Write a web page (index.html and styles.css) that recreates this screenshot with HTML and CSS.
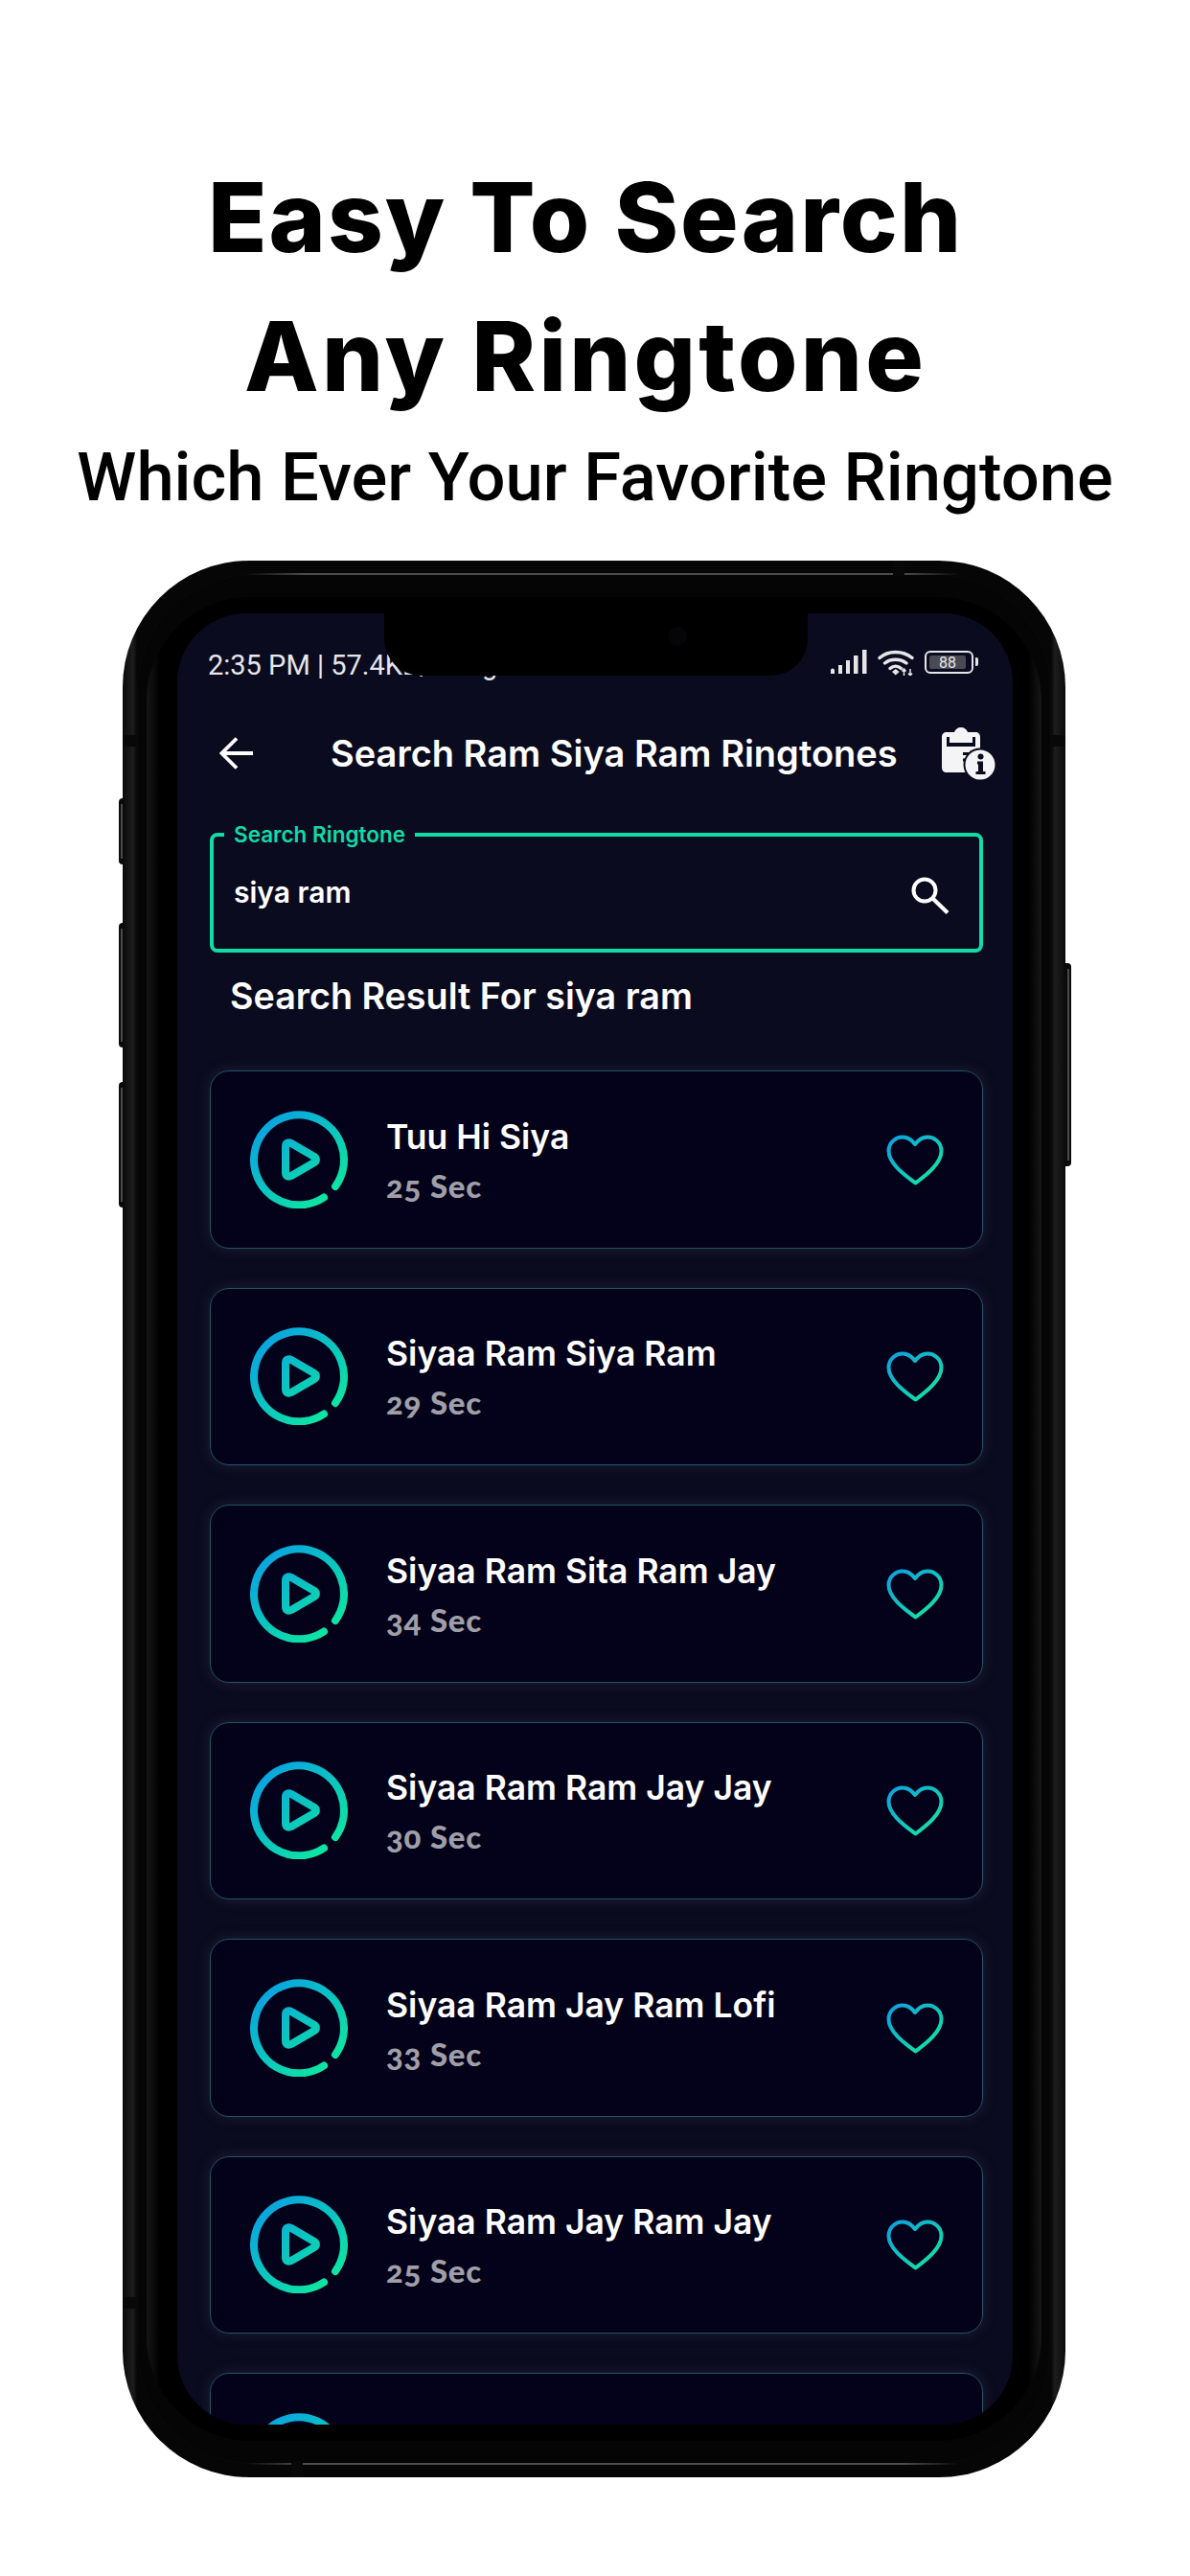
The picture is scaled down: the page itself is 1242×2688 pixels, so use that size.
FILE: index.html
```html
<!DOCTYPE html>
<html lang="en">
<head>
<meta charset="utf-8">
<title>Easy To Search Any Ringtone</title>
<link rel="stylesheet" href="styles.css">
</head>
<body>
<svg class="defs" width="0" height="0" aria-hidden="true">
  <defs>
    <linearGradient id="g-play" gradientUnits="userSpaceOnUse" x1="14" y1="12" x2="84" y2="92">
      <stop offset="0" stop-color="#0aa3e0"/>
      <stop offset="1" stop-color="#0ce8a0"/>
    </linearGradient>
    <linearGradient id="g-heart" gradientUnits="userSpaceOnUse" x1="8" y1="4" x2="46" y2="50">
      <stop offset="0" stop-color="#0ea5dc"/>
      <stop offset="1" stop-color="#12e3a4"/>
    </linearGradient>
    <symbol id="play" viewBox="0 0 102 102">
      <path d="M89 79A47 47 0 1 0 77 90.500" fill="none" stroke="url(#g-play)" stroke-width="8" stroke-linecap="round"/>
      <path d="M37 37.500C37 33.500 40 32.500 43 34L67 48C69.500 49.500 69.500 52.500 67 54L43 68C40 69.500 37 68.500 37 64.500Z" fill="none" stroke="url(#g-play)" stroke-width="8" stroke-linejoin="round"/>
    </symbol>
    <symbol id="heart" viewBox="0 0 60 54">
      <path d="M30.500 50.500C22 44 2.500 31 2.500 17C2.500 8 10 2.500 17 2.500C23 2.500 27 6 30 10C33 6 37 2.500 43 2.500C50 2.500 57.500 8 57.500 17C57.500 31 39 44 30.500 50.500Z" fill="none" stroke="url(#g-heart)" stroke-width="4" stroke-linejoin="round"/>
    </symbol>
  </defs>
</svg>

<main class="page">
  <header class="headline">
    <h1 class="headline-title">Easy To Search<br><span class="headline-line2">Any Ringtone</span></h1>
    <p class="headline-sub">Which Ever Your Favorite Ringtone</p>
  </header>

  <div class="phone">
    <span class="btn btn-l1"></span>
    <span class="btn btn-l2"></span>
    <span class="btn btn-l3"></span>
    <span class="btn btn-r1"></span>
    <span class="rim-line rim-top"></span>
    <span class="rim-line rim-bottom"></span>
    <span class="gap gap-top"></span>
    <span class="gap gap-bottom"></span>
    <span class="gap gap-left1"></span>
    <span class="gap gap-right1"></span>
    <span class="gap gap-left2"></span>

    <div class="rim">
      <div class="bezel">
        <div class="screen">
          <div class="notch"><span class="camera"></span></div>

          <div class="statusbar">
            <span class="status-text">2:35 PM | 57.4KB/s · Jg</span>
            <div class="status-icons">
              <svg class="ic-signal" viewBox="0 0 38 25" aria-hidden="true">
                <path d="M0 21.500a2 2 0 0 1 4 0V25H0zM8 16h4v9H8zM16 11h4v14h-4zM24 6h4.500v19H24zM33 0h4.500v25H33z" fill="#e6e6ea"/>
              </svg>
              <svg class="ic-wifi" viewBox="0 0 38 28" aria-hidden="true">
                <path d="M2 9.500C11 1.500 26 1.500 36 9.500M7.500 15C13.500 10 23.500 10 30 15M13 20.500C16.500 17.500 21 17.500 24.500 20.500" fill="none" stroke="#e6e6ea" stroke-width="3.400" stroke-linecap="round"/>
                <path d="M15 24l3.800-3 3.800 3-3.800 3.500z" fill="#e6e6ea"/>
                <path d="M27.500 21v7M34 21v7M25.500 23.500l2-2.500 2 2.500M32 25.500l2 2.500 2-2.500" fill="none" stroke="#e6e6ea" stroke-width="1.500"/>
              </svg>
              <div class="battery">
                <div class="battery-body"><span class="battery-fill">88</span></div>
                <span class="battery-tip"></span>
              </div>
            </div>
          </div>

          <div class="appbar">
            <svg class="ic-back" viewBox="0 0 36 36" aria-hidden="true">
              <path d="M35 18H3M18 2.500L2.500 18 18 33.500" fill="none" stroke="#fff" stroke-width="3.800"/>
            </svg>
            <h2 class="appbar-title">Search Ram Siya Ram Ringtones</h2>
            <svg class="ic-info" viewBox="0 0 56 56" aria-hidden="true">
              <path d="M5 6h8C14 3 16.500 1 20 1s6 2 7 5h8c3 0 5 2 5 5v32c0 3-2 5-5 5H5c-3 0-5-2-5-5V11c0-3 2-5 5-5z" fill="#f4f4f6"/>
              <path d="M5 11h3v6h24v-6h3v10H5z" fill="#0b0b1f"/>
              <path d="M5 21h30v3H22v3h10v3H22v3h8v3H22v4h8v4H5z" fill="#f4f4f6"/>
              <path d="M22 27h18v3H22zM22 33.500h18v3H22z" fill="#0b0b1f"/>
              <circle cx="40" cy="40" r="17.500" fill="#0b0b1f"/>
              <circle cx="40" cy="40" r="15.500" fill="#f4f4f6"/>
              <circle cx="40.500" cy="31.500" r="3" fill="#0b0b1f"/>
              <path d="M37 36.500h6V47h2.500v3H35.500v-3H38v-7.500h-1z" fill="#0b0b1f"/>
            </svg>
          </div>

          <div class="search">
            <span class="search-label">Search Ringtone</span>
            <span class="search-value">siya ram</span>
            <svg class="ic-search" viewBox="0 0 40 40" aria-hidden="true">
              <circle cx="14" cy="14" r="11.500" fill="none" stroke="#fff" stroke-width="4"/>
              <path d="M22.500 22.500L38 37.500" fill="none" stroke="#fff" stroke-width="4.200"/>
            </svg>
          </div>

          <h3 class="result-heading">Search Result For siya ram</h3>

          <ul class="list">
            <li class="card">
              <svg class="ic-play"><use href="#play"/></svg>
              <div class="card-text"><span class="card-title">Tuu Hi Siya</span><span class="card-time">25 Sec</span></div>
              <svg class="ic-heart"><use href="#heart"/></svg>
            </li>
            <li class="card">
              <svg class="ic-play"><use href="#play"/></svg>
              <div class="card-text"><span class="card-title">Siyaa Ram Siya Ram</span><span class="card-time">29 Sec</span></div>
              <svg class="ic-heart"><use href="#heart"/></svg>
            </li>
            <li class="card">
              <svg class="ic-play"><use href="#play"/></svg>
              <div class="card-text"><span class="card-title">Siyaa Ram Sita Ram Jay</span><span class="card-time">34 Sec</span></div>
              <svg class="ic-heart"><use href="#heart"/></svg>
            </li>
            <li class="card">
              <svg class="ic-play"><use href="#play"/></svg>
              <div class="card-text"><span class="card-title">Siyaa Ram Ram Jay Jay</span><span class="card-time">30 Sec</span></div>
              <svg class="ic-heart"><use href="#heart"/></svg>
            </li>
            <li class="card">
              <svg class="ic-play"><use href="#play"/></svg>
              <div class="card-text"><span class="card-title">Siyaa Ram Jay Ram Lofi</span><span class="card-time">33 Sec</span></div>
              <svg class="ic-heart"><use href="#heart"/></svg>
            </li>
            <li class="card">
              <svg class="ic-play"><use href="#play"/></svg>
              <div class="card-text"><span class="card-title">Siyaa Ram Jay Ram Jay</span><span class="card-time">25 Sec</span></div>
              <svg class="ic-heart"><use href="#heart"/></svg>
            </li>
            <li class="card">
              <svg class="ic-play"><use href="#play"/></svg>
            </li>
          </ul>
        </div>
      </div>
    </div>
  </div>
</main>
</body>
</html>
```

FILE: styles.css
```css
* { box-sizing: border-box; }

html, body {
  margin: 0;
  padding: 0;
  background: #fff;
}

.defs { position: absolute; }

.page {
  width: 1242px;
  height: 2688px;
  overflow: hidden;
  display: flex;
  flex-direction: column;
}

/* Headline */
.headline {
  height: 585px;
  padding-top: 154px;
  text-align: center;
  color: #000;
}

.headline-title {
  margin: 0;
  padding-right: 20px;
  font: 800 101px/145px Inter, "Liberation Sans", sans-serif;
  letter-spacing: 2px;
}

.headline-line2 { letter-spacing: 3.200px; }

.headline-sub {
  margin: 10px 0 0;
  font: 500 70.500px/88px Roboto, "Liberation Sans", sans-serif;
}

/* Phone frame */
.phone {
  position: relative;
  width: 984px;
  height: 2000px;
  margin-left: 128px;
  padding: 14px 15px;
  border-radius: 132px;
  background: linear-gradient(90deg, #0a0a0a 0, #1d1d1d 11px, #060606 15px, #060606 969px, #1d1d1d 973px, #0a0a0a 984px);
}

.rim {
  height: 100%;
  padding: 24px 10px;
  border-radius: 120px;
  background: #050505;
  box-shadow: inset 0 0 0 1px #0b0b0b;
}

.bezel {
  height: 100%;
  padding: 17px 30px 17px 32px;
  border-radius: 108px;
  background: linear-gradient(90deg, #161616 0, #000 14px, #000 calc(100% - 14px), #161616 100%);
}

.screen {
  position: relative;
  height: 100%;
  padding: 0 31px 0 34px;
  overflow: hidden;
  border-radius: 72px;
  background: #0b0b1f;
}

.btn {
  position: absolute;
  width: 5px;
  background: #0a0a0a;
}

.btn::after {
  content: "";
  position: absolute;
  top: 6px;
  bottom: 6px;
  left: 2px;
  width: 2px;
  background: #4a4a4a;
}

.btn-l1 { left: -4px; top: 248px; height: 69px; border-radius: 4px 0 0 4px; }
.btn-l2 { left: -4px; top: 378px; height: 130px; border-radius: 4px 0 0 4px; }
.btn-l3 { left: -4px; top: 544px; height: 131px; border-radius: 4px 0 0 4px; }
.btn-r1 { right: -6px; top: 420px; height: 212px; width: 6px; border-radius: 0 4px 4px 0; }

.rim-line {
  position: absolute;
  left: 130px;
  right: 110px;
  height: 2px;
  z-index: 1;
  background: linear-gradient(90deg, transparent, #4d4d4d 8%, #4d4d4d 92%, transparent);
}

.rim-top { top: 13px; }
.rim-bottom { bottom: 13px; }

.gap {
  position: absolute;
  z-index: 2;
  background: #080808;
}

.gap-top { top: 0; left: 804px; width: 12px; height: 16px; }
.gap-bottom { bottom: 0; left: 176px; width: 12px; height: 16px; }
.gap-left1 { left: 0; top: 182px; width: 15px; height: 12px; }
.gap-right1 { right: 0; top: 182px; width: 15px; height: 12px; }
.gap-left2 { left: 0; top: 1812px; width: 15px; height: 12px; }

/* Notch */
.notch {
  position: absolute;
  top: 0;
  left: 216px;
  width: 442px;
  height: 65px;
  z-index: 3;
  background: #000;
  border-radius: 0 0 38px 38px;
}

.camera {
  position: absolute;
  top: 14px;
  left: 296px;
  width: 20px;
  height: 20px;
  border-radius: 50%;
  background: #050507;
}

/* Status bar */
.statusbar {
  display: flex;
  align-items: center;
  justify-content: space-between;
  height: 71px;
  padding-top: 37px;
  margin-left: -2px;
  margin-right: 5px;
}

.status-text {
  font: 400 29px/34px Roboto, "Liberation Sans", sans-serif;
  color: #e6e6ea;
  white-space: nowrap;
}

.status-icons {
  display: flex;
  align-items: center;
  gap: 11px;
  margin-top: -7px;
}

.ic-signal { width: 38px; height: 25px; }
.ic-wifi { width: 38px; height: 28px; }

.battery {
  display: flex;
  align-items: center;
  gap: 2px;
}

.battery-body {
  width: 51px;
  height: 24px;
  padding: 3px;
  border: 2px solid #e6e6ea;
  border-radius: 6px;
}

.battery-fill {
  display: block;
  width: 38px;
  height: 14px;
  background: #4a4a52;
  border-radius: 2px;
  font: 400 16px/15px Roboto, "Liberation Sans", sans-serif;
  color: #e6e6ea;
  text-align: center;
}

.battery-tip {
  width: 3px;
  height: 9px;
  border-radius: 0 2px 2px 0;
  background: #e6e6ea;
}

/* App bar */
.appbar {
  display: flex;
  align-items: center;
  height: 149px;
  margin: 0 -13px 0 10px;
}

.ic-back { width: 36px; height: 36px; flex: none; }
.ic-info { width: 56px; height: 56px; flex: none; margin-left: auto; }

.appbar-title {
  margin: 0 0 0 80px;
  font: 600 38px/44px Inter, "Liberation Sans", sans-serif;
  color: #fff;
  white-space: nowrap;
}

/* Search */
.search {
  position: relative;
  display: flex;
  align-items: center;
  justify-content: space-between;
  height: 125px;
  margin-top: 9px;
  padding: 0 31px 0 21px;
  border: 4px solid #0fdca6;
  border-radius: 8px;
}

.search-label {
  position: absolute;
  top: -14px;
  left: 11px;
  padding: 0 10px;
  background: #0b0b1f;
  font: 600 22.500px/24px Inter, "Liberation Sans", sans-serif;
  color: #0fdca6;
}

.search-value {
  margin-top: -2px;
  font: 600 30px/34px Inter, "Liberation Sans", sans-serif;
  color: #fff;
}

.ic-search { width: 40px; height: 40px; margin-top: 6px; }

.result-heading {
  margin: 21px 0 0 21px;
  font: 600 37.700px/48px Inter, "Liberation Sans", sans-serif;
  color: #fff;
}

/* Cards */
.list {
  display: flex;
  flex-direction: column;
  gap: 41px;
  list-style: none;
  margin: 54px 0 0;
  padding: 0;
}

.card {
  display: flex;
  flex: none;
  align-items: center;
  height: 185.500px;
  padding: 0 40px 0 41px;
  border: 1px solid #1f5364;
  border-radius: 20px;
  background: #03021a;
  box-shadow: 0 0 14px rgba(70, 70, 100, .35);
}

.ic-play { width: 102px; height: 102px; flex: none; }

.card-text {
  display: flex;
  flex-direction: column;
  margin-left: 40px;
  margin-top: 4px;
  min-width: 0;
}

.card-title {
  margin-top: -4px;
  font: 600 35.500px/44px Inter, "Liberation Sans", sans-serif;
  color: #fff;
  white-space: nowrap;
}

.card-time {
  margin-top: 10px;
  font: 900 33px/36px Lato, "Liberation Sans", sans-serif;
  font-variant-numeric: oldstyle-nums;
  letter-spacing: .8px;
  color: #a09fa8;
}

.ic-heart { width: 60px; height: 54px; flex: none; margin-left: auto; margin-top: 2px; }
```
